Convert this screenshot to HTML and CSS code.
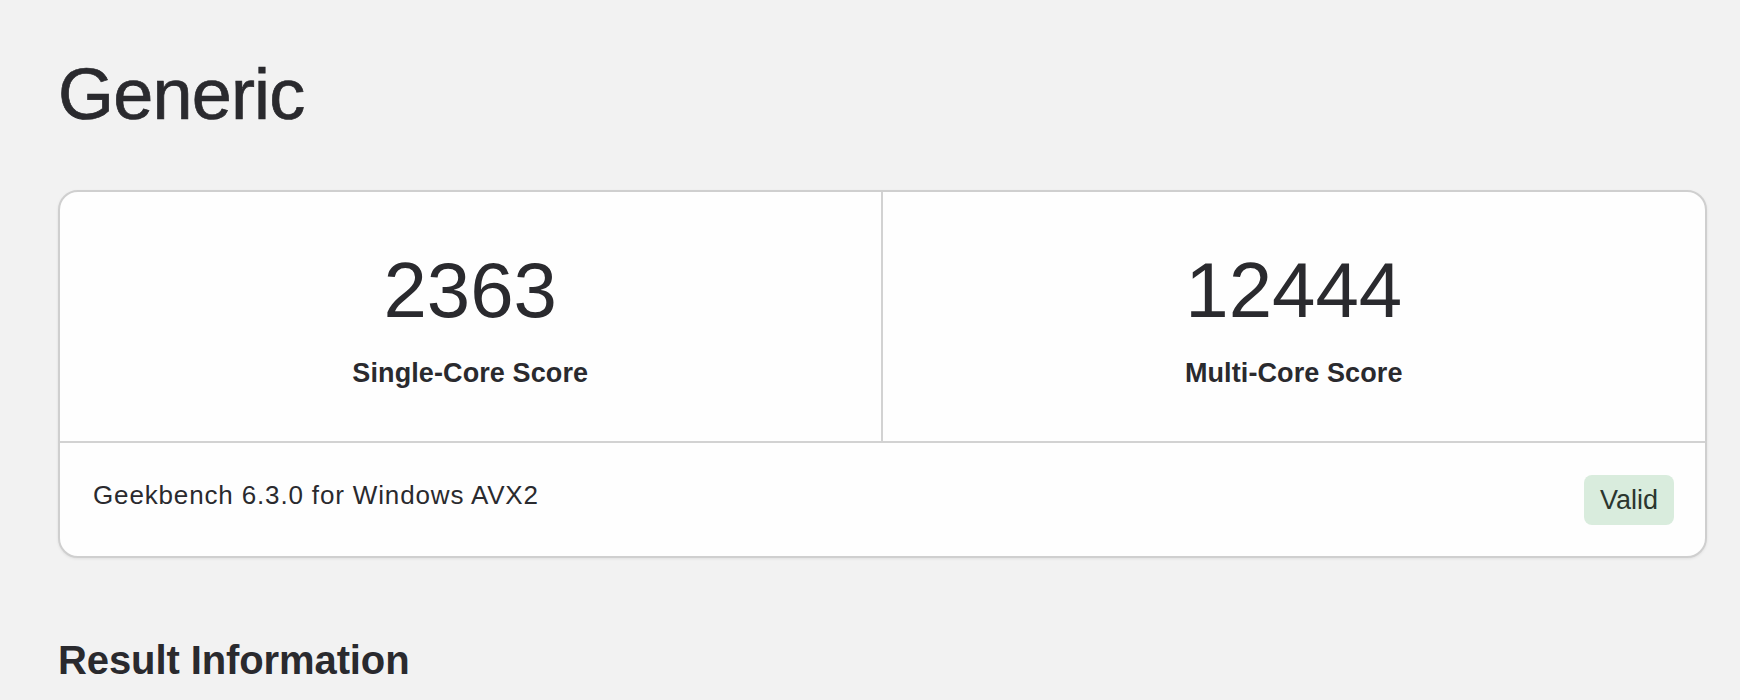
FILE: index.html
```html
<!DOCTYPE html>
<html lang="en">
<head>
<meta charset="utf-8">
<title>Generic - Geekbench</title>
<link rel="stylesheet" href="styles.css">
</head>
<body>
<main class="page">
  <h1 class="title">Generic</h1>
  <section class="score-card">
    <div class="scores">
      <div class="score-cell">
        <div class="score">2363</div>
        <div class="score-label">Single-Core Score</div>
      </div>
      <div class="score-cell">
        <div class="score">12444</div>
        <div class="score-label">Multi-Core Score</div>
      </div>
    </div>
    <div class="card-footer">
      <div class="version">Geekbench 6.3.0 for Windows AVX2</div>
      <div class="badge">Valid</div>
    </div>
  </section>
  <h2 class="section-title">Result Information</h2>
</main>
</body>
</html>
```

FILE: styles.css
```css
html, body {
  margin: 0;
  padding: 0;
}
body {
  background: #f2f2f2;
  color: #2a2a2e;
  font-family: "Liberation Sans", Arial, Helvetica, sans-serif;
}
.page {
  padding: 51px 33px 0 58px;
}
.title {
  margin: 0;
  font-size: 72px;
  font-weight: 400;
  line-height: 86px;
  letter-spacing: -0.8px;
  -webkit-text-stroke: 0.7px currentColor;
}
.score-card {
  margin-top: 53px;
  background: #fefefe;
  border: 2px solid #cfcfcf;
  border-radius: 20px;
  box-shadow: 0 1px 3px rgba(0, 0, 0, 0.08);
}
.scores {
  display: grid;
  grid-template-columns: 1fr 1fr;
  border-bottom: 2px solid #d2d2d2;
}
.score-cell {
  display: flex;
  flex-direction: column;
  align-items: center;
  padding: 59px 0 54px;
}
.score-cell:first-child {
  border-right: 2px solid #d2d2d2;
}
.score {
  font-size: 78px;
  line-height: 78px;
  font-weight: 400;
}
.score-label {
  margin-top: 31px;
  font-size: 27px;
  line-height: 27px;
  font-weight: 700;
  letter-spacing: 0.1px;
}
.card-footer {
  display: flex;
  justify-content: space-between;
  align-items: flex-start;
  padding: 32px 31px 31px 33px;
}
.version {
  margin-top: 7px;
  font-size: 26px;
  line-height: 26px;
  letter-spacing: 0.85px;
}
.badge {
  height: 50px;
  padding: 1px 16px 0;
  box-sizing: border-box;
  background: #d9ecdd;
  color: #2b362e;
  border-radius: 8px;
  font-size: 27px;
  line-height: 49px;
}
.section-title {
  margin: 78px 0 0;
  font-size: 40px;
  line-height: 48px;
  font-weight: 700;
  letter-spacing: -0.1px;
}
```
